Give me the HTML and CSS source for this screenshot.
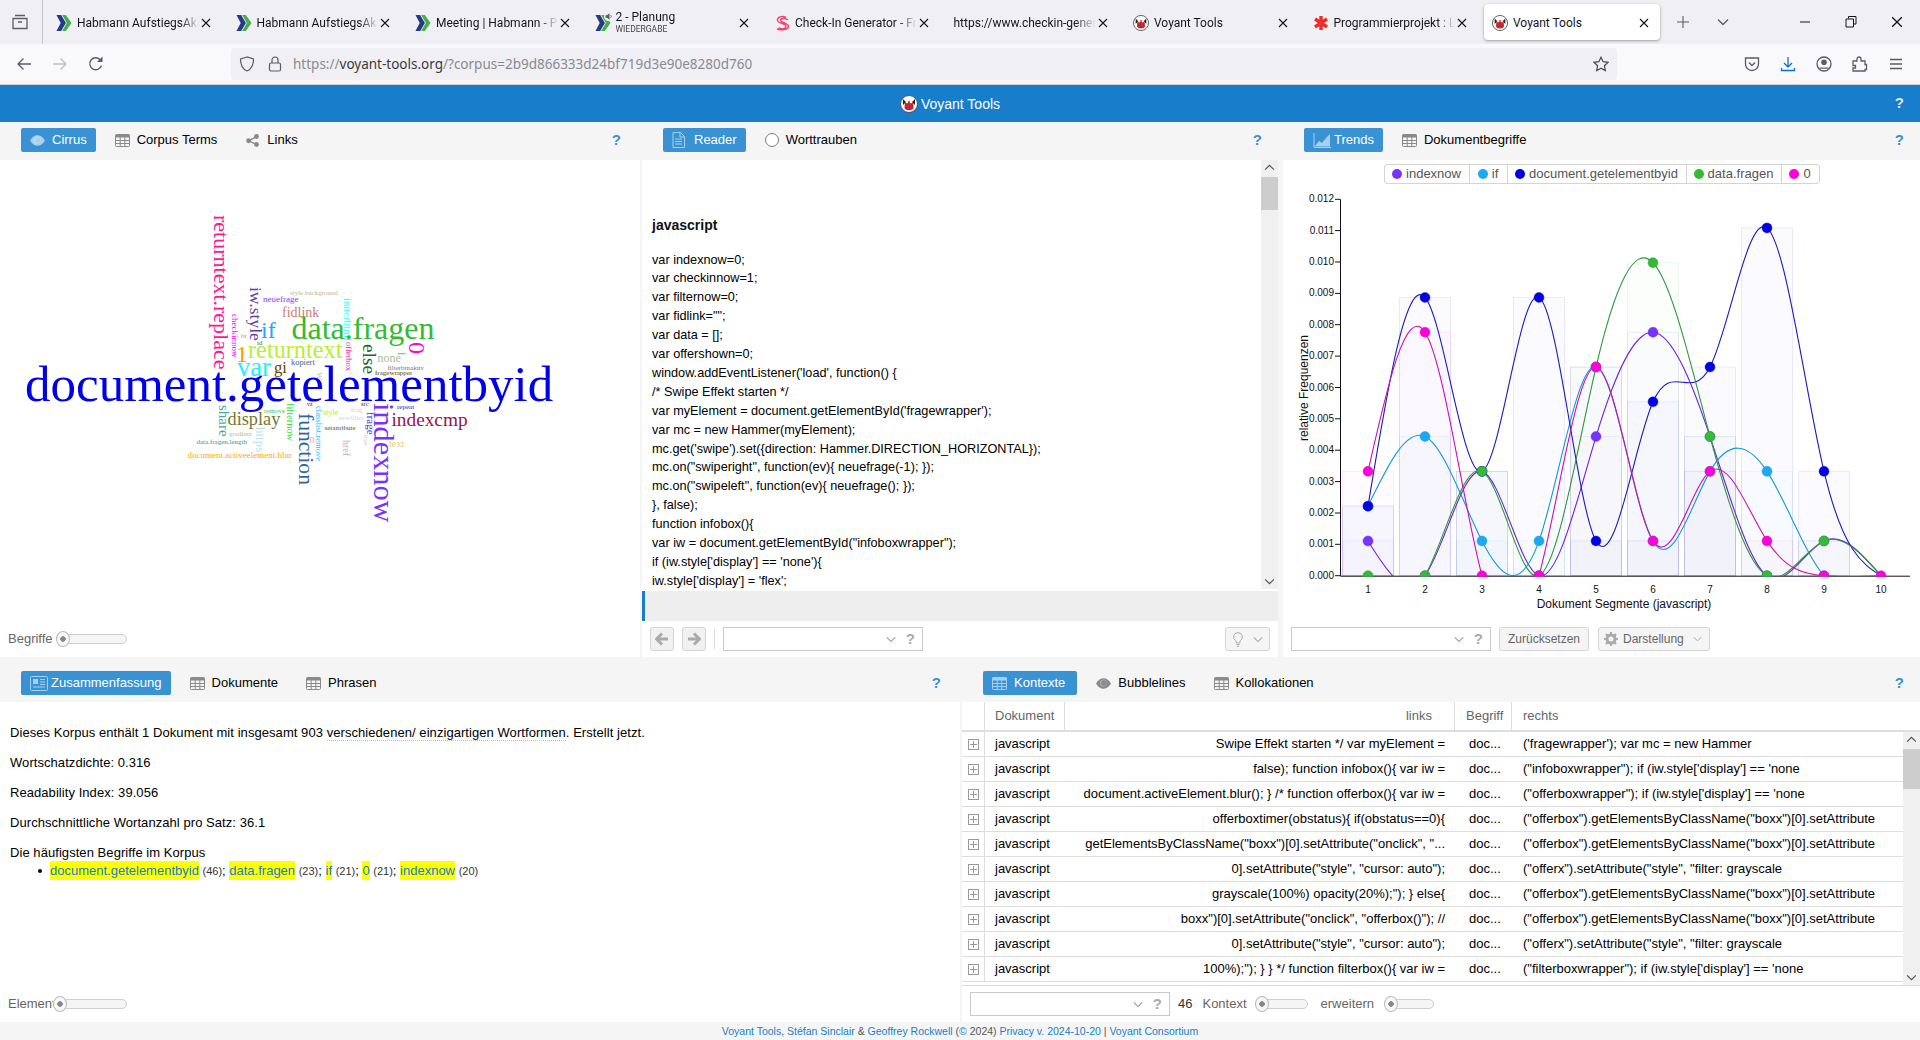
FILE: index.html
```html
<!DOCTYPE html>
<html lang="de">
<head>
<meta charset="utf-8">
<title>Voyant Tools</title>
<link rel="stylesheet" href="styles.css">
</head>
<body>
<svg class="defs" width="0" height="0" aria-hidden="true">
  <symbol id="i-grid" viewBox="0 0 15 13"><rect x=".5" y=".5" width="14" height="12" rx="1" fill="none" stroke="currentColor"/><rect x=".5" y=".5" width="14" height="3" fill="currentColor"/><path d="M5.2 3v10M9.8 3v10M0 6.5h15M0 9.5h15" stroke="currentColor" fill="none"/></symbol>
  <symbol id="i-eye" viewBox="0 0 16 12"><path d="M0 6C2.5 2 5 .5 8 .5S13.500 2 16 6c-2.500 4-5 5.500-8 5.500S2.500 10 0 6z" fill="currentColor"/><circle cx="8" cy="5.500" r="3.800" fill="#fff" opacity=".35"/><circle cx="8.500" cy="5.500" r="3" fill="currentColor"/></symbol>
  <symbol id="i-share" viewBox="0 0 14 14"><circle cx="11.300" cy="2.700" r="2.600" fill="currentColor"/><circle cx="2.800" cy="7.300" r="2.600" fill="currentColor"/><circle cx="11.300" cy="11.300" r="2.600" fill="currentColor"/><path d="M11 3 3 7.300l8 4" stroke="currentColor" stroke-width="1.500" fill="none"/></symbol>
  <symbol id="i-doc" viewBox="0 0 13 16"><path d="M1 .5h7.500L12.500 4.500V15.500H1z" fill="none" stroke="currentColor"/><path d="M3 7h7M3 9.500h7M3 12h7M8 1v4h4" stroke="currentColor" fill="none"/></symbol>
  <symbol id="i-trend" viewBox="0 0 18 15"><path d="M1 0v14.500h17" stroke="currentColor" fill="none"/><path d="M2 13 6 8l3 2 4-5 4-4v12.500H2z" fill="currentColor"/></symbol>
  <symbol id="i-news" viewBox="0 0 18 15"><rect x=".5" y=".5" width="17" height="14" rx="1" fill="none" stroke="currentColor"/><rect x="3" y="3" width="5" height="5" fill="currentColor"/><path d="M10 3.500h5M10 6h5M10 8.500h5M3 11h12" stroke="currentColor" fill="none"/></symbol>
  <symbol id="i-voyant" viewBox="0 0 18 18"><circle cx="9" cy="9" r="8.500" fill="#fff" stroke="#555"/><path d="M3 4l3 3-3 3zM15 4l-3 3 3 3z" fill="#222"/><path d="M5 7c2-1.500 6-1.500 8 0l.5 6c-1 3-8 3-9 0z" fill="#c4252e"/><circle cx="7" cy="7" r="1.300" fill="#fff"/><circle cx="11" cy="7" r="1.300" fill="#fff"/></symbol>
  <symbol id="i-chev" viewBox="0 0 12 8"><path d="M1 1.500l5 5 5-5" fill="none" stroke="currentColor" stroke-width="1.300"/></symbol>
  <symbol id="i-habmann" viewBox="0 0 16 17"><path d="M0 0h5l5 8.500L5 17H0l4.500-8.500z" fill="#263a86"/><path d="M6 0h4l6 8.500L10 17H6l5-8.500z" fill="#45b04a"/></symbol>
  <symbol id="i-x" viewBox="0 0 10 10"><path d="M1 1l8 8M9 1 1 9" stroke="currentColor" stroke-width="1.100" fill="none"/></symbol>
</svg>

<header class="tabbar">
  <div class="side-btn"><svg class="ico16" viewBox="0 0 16 16"><path d="M3 1.500h10M1 4.500h14v10H1z M6 8h4" fill="none" stroke="#5b5b66" stroke-width="1.300"/></svg></div>
  <div class="tab"><svg class="favicon"><use href="#i-habmann"/></svg><span class="tab-label">Habmann AufstiegsAkademie</span><svg class="tab-x"><use href="#i-x"/></svg></div>
  <div class="tab"><svg class="favicon"><use href="#i-habmann"/></svg><span class="tab-label">Habmann AufstiegsAkademie</span><svg class="tab-x"><use href="#i-x"/></svg></div>
  <div class="tab"><svg class="favicon"><use href="#i-habmann"/></svg><span class="tab-label">Meeting | Habmann - Projekt</span><svg class="tab-x"><use href="#i-x"/></svg></div>
  <div class="tab"><span class="fav-wrap"><svg class="favicon"><use href="#i-habmann"/></svg><svg class="speaker" viewBox="0 0 9 9"><circle cx="4.500" cy="4.500" r="4.500" fill="#f0f0f4"/><path d="M1.500 3.200h1.500L5.500 1.200v6.600L3 5.800H1.500z" fill="#5b5b66"/><path d="M6.500 3a2 2 0 0 1 0 3" fill="none" stroke="#5b5b66" stroke-width=".7"/></svg></span><span class="tab-label tab-two">2 - Planung<small>WIEDERGABE</small></span><svg class="tab-x"><use href="#i-x"/></svg></div>
  <div class="tab"><svg class="favicon" viewBox="0 0 16 16"><path d="M12 2.500C8 .5 3 2 3.500 5.500S12 8 12 11s-4 3.500-7.500 2M14 5C11 2.500 6.500 3.500 6.500 5.500S14 8 14.500 11 10 16 3 14" fill="none" stroke="#f2416b" stroke-width="1.400"/></svg><span class="tab-label">Check-In Generator - Free</span><svg class="tab-x"><use href="#i-x"/></svg></div>
  <div class="tab"><span class="tab-label">https://www.checkin-generator.de</span><svg class="tab-x"><use href="#i-x"/></svg></div>
  <div class="tab"><svg class="favicon"><use href="#i-voyant"/></svg><span class="tab-label">Voyant Tools</span><svg class="tab-x"><use href="#i-x"/></svg></div>
  <div class="tab"><svg class="favicon" viewBox="0 0 16 16"><path d="M8 1v14M2 4l12 8M14 4 2 12" stroke="#ef2b2d" stroke-width="3.400"/></svg><span class="tab-label">Programmierprojekt : Lernen</span><svg class="tab-x"><use href="#i-x"/></svg></div>
  <div class="tab tab-active"><svg class="favicon"><use href="#i-voyant"/></svg><span class="tab-label">Voyant Tools</span><svg class="tab-x"><use href="#i-x"/></svg></div>
  <div class="strip-btn"><svg class="ico12" viewBox="0 0 12 12"><path d="M6 0v12M0 6h12" stroke="#5b5b66" stroke-width="1.100"/></svg></div>
  <div class="strip-btn"><svg class="ico12 chev-tab"><use href="#i-chev"/></svg></div>
  <div class="win-controls">
    <div class="win-btn"><svg class="ico12" viewBox="0 0 12 12"><path d="M1 6h10" stroke="#15141a"/></svg></div>
    <div class="win-btn"><svg class="ico12" viewBox="0 0 12 12"><path d="M3.500 2.500V.5h7.500v7.500h-2.500M1 3h7.500v8H1z" fill="none" stroke="#15141a"/></svg></div>
    <div class="win-btn"><svg class="ico12"><use href="#i-x"/></svg></div>
  </div>
</header>

<nav class="navbar">
  <div class="nav-btn"><svg class="ico16" viewBox="0 0 16 16"><path d="M15 8H2M7.500 2.500 2 8l5.500 5.500" fill="none" stroke="#5b5b66" stroke-width="1.300"/></svg></div>
  <div class="nav-btn"><svg class="ico16" viewBox="0 0 16 16"><path d="M1 8h13M8.500 2.500 14 8l-5.500 5.500" fill="none" stroke="#bfbfc4" stroke-width="1.300"/></svg></div>
  <div class="nav-btn"><svg class="ico16" viewBox="0 0 16 16"><path d="M13.500 9.500A6 6 0 1 1 12 3.500" fill="none" stroke="#5b5b66" stroke-width="1.300"/><path d="M14.500.5v5.500H9z" fill="#5b5b66"/></svg></div>
  <div class="urlbar">
    <svg class="ico16" viewBox="0 0 16 16"><path d="M8 1 1.500 3c0 6 1.500 10 6.500 12 5-2 6.500-6 6.500-12z" fill="none" stroke="#5b5b66" stroke-width="1.200"/></svg>
    <svg class="ico16" viewBox="0 0 16 16"><rect x="2.500" y="7" width="11" height="8" rx="1.500" fill="none" stroke="#5b5b66" stroke-width="1.200"/><path d="M5 7V4a3 3 0 0 1 6 0v3" fill="none" stroke="#5b5b66" stroke-width="1.200"/></svg>
    <span class="url-text">https://<b>voyant-tools.org</b>/?corpus=2b9d866333d24bf719d3e90e8280d760</span>
    <svg class="ico16 url-star" viewBox="0 0 16 16"><path d="M8 1.200l2.100 4.500 4.900.6-3.600 3.400.9 4.900L8 12.200l-4.300 2.400.9-4.900L1 6.300l4.900-.6z" fill="none" stroke="#4a4a52" stroke-width="1.200"/></svg>
  </div>
  <div class="nav-right">
    <div class="nav-btn"><svg class="ico16" viewBox="0 0 16 16"><path d="M1.500 2h13v6a6.500 6.500 0 0 1-13 0z" fill="none" stroke="#5b5b66" stroke-width="1.300"/><path d="M5 6.500l3 3 3-3" fill="none" stroke="#5b5b66" stroke-width="1.300"/></svg></div>
    <div class="nav-btn"><svg class="ico16" viewBox="0 0 16 16"><path d="M8 1v9.500M4 7l4 4 4-4M1.500 12v2.500h13V12" fill="none" stroke="#0b6ee0" stroke-width="1.300"/></svg></div>
    <div class="nav-btn"><svg class="ico16" viewBox="0 0 16 16"><circle cx="8" cy="8" r="7" fill="none" stroke="#5b5b66" stroke-width="1.300"/><circle cx="8" cy="6.200" r="2.800" fill="#5b5b66"/><path d="M3.500 11.500h9v1.200H3.500z" fill="#5b5b66"/></svg></div>
    <div class="nav-btn"><svg class="ico16" viewBox="0 0 16 16"><path d="M1 5h4V3a2 2 0 0 1 4 0v2h4v3.500h1.500v5H13v1.500H1v-3h2.500V9.500H1z" fill="none" stroke="#5b5b66" stroke-width="1.300"/></svg></div>
    <div class="nav-btn"><svg class="ico16" viewBox="0 0 16 16"><path d="M2 3.500h12M2 8h12M2 12.500h12" stroke="#5b5b66" stroke-width="1.300"/></svg></div>
  </div>
</nav>

<div class="app-title">
  <svg class="title-logo"><use href="#i-voyant"/></svg><span>Voyant Tools</span><span class="help help-white">?</span>
</div>

<main class="workspace">
  <div class="row row-top">
    <section class="panel panel-cirrus">
      <div class="toolbar">
        <span class="tb-btn tb-on"><svg class="tb-ico"><use href="#i-eye"/></svg>Cirrus</span>
        <span class="tb-btn"><svg class="tb-ico"><use href="#i-grid"/></svg>Corpus Terms</span>
        <span class="tb-btn"><svg class="tb-ico"><use href="#i-share"/></svg>Links</span>
        <span class="help help-far">?</span>
      </div>
      <div class="panel-body">
        <svg class="cloud" viewBox="0 160 640 461" preserveAspectRatio="xMinYMin">
          <g class="cloud-words">
            <text x="25" y="401" font-size="51" fill="#0000ee">document.getelementbyid</text>
            <text transform="translate(213.500 215) rotate(90)" font-size="22" fill="#ff1493">returntext.replace</text>
            <text transform="translate(250 287) rotate(90)" font-size="17.500" fill="#6a3d9a">iw.style</text>
            <text x="263" y="302" font-size="9" fill="#7a44ff">neuefrage</text>
            <text x="290" y="295" font-size="7" fill="#c8b090">style.background</text>
            <text transform="translate(344 298) rotate(90)" font-size="11" fill="#33ffff">innerhtml</text>
            <text x="282" y="317" font-size="14" fill="#c88070">fidlink</text>
            <text transform="translate(232 314) rotate(90)" font-size="9" fill="#ff00ff">checkinnow</text>
            <text x="261" y="338" font-size="24" fill="#1ba8ff">if</text>
            <text x="291.500" y="339" font-size="32" fill="#33bb33">data.fragen</text>
            <text transform="translate(409 342) rotate(90)" font-size="24" fill="#ff00dd">0</text>
            <text x="241" y="338" font-size="7" fill="#c89070">br</text>
            <text x="257" y="345" font-size="7" fill="#556b2f">id</text>
            <text x="236" y="362" font-size="24" fill="#ff9900">1</text>
            <text x="248" y="358" font-size="24.300" fill="#b8ee33">returntext</text>
            <text transform="translate(346 342) rotate(90)" font-size="8.500" fill="#ff1493">offerbox</text>
            <text transform="translate(362.500 344) rotate(90)" font-size="19.300" fill="#226633">else</text>
            <text transform="translate(398 352) rotate(90)" font-size="12" fill="#9999aa">i</text>
            <text x="377.500" y="362" font-size="12" fill="#aabb99">none</text>
            <text x="387.500" y="370" font-size="7" fill="#667788">filterbtnaktiv</text>
            <text x="375" y="375" font-size="7" fill="#554400">fragewrapper</text>
            <text x="237" y="376" font-size="26.600" fill="#22eeff">var</text>
            <text x="274" y="372.500" font-size="16.700" fill="#664400">gi</text>
            <text x="291" y="365" font-size="8.400" fill="#336688">kopiert</text>
            <text transform="translate(317 372) rotate(90)" font-size="11" fill="#ccbbdd">w</text>
            <text transform="translate(350 372) rotate(90)" font-size="6" fill="#eecc88">2</text>
            <text transform="translate(219 405) rotate(90)" font-size="15" fill="#44aa99">share</text>
            <text x="227.500" y="425" font-size="18.300" fill="#777733">display</text>
            <text x="264" y="413" font-size="7" fill="#33cc55">remove</text>
            <text transform="translate(287 403) rotate(90)" font-size="10.400" fill="#33dd33">filternow</text>
            <text transform="translate(299 413) rotate(90)" font-size="21.600" fill="#336699">function</text>
            <text x="307" y="406" font-size="6" fill="#880000">vz</text>
            <text transform="translate(316 406) rotate(90)" font-size="8.600" fill="#33bbff">classlist.remove</text>
            <text x="323" y="415" font-size="8" fill="#aaee33">style</text>
            <text x="324.500" y="430" font-size="7" fill="#555522">setattribute</text>
            <text x="351" y="412" font-size="7" fill="#ffbbbb">frag</text>
            <text x="338.500" y="420" font-size="7" fill="#bbddee">newfilter</text>
            <text x="361" y="406" font-size="6.500" fill="#442266">src</text>
            <text x="397" y="409" font-size="7" fill="#2222cc">repeat</text>
            <text transform="translate(367 412) rotate(90)" font-size="11" fill="#3333dd">frage</text>
            <text transform="translate(364 435) rotate(90)" font-size="7" fill="#ccbbdd">true</text>
            <text transform="translate(373.500 403) rotate(90)" font-size="30.300" fill="#7733ff">indexnow</text>
            <text x="391.500" y="425.500" font-size="19.300" fill="#991155">indexcmp</text>
            <text x="389" y="447" font-size="10.300" fill="#e8cc77">text</text>
            <text transform="translate(343 440) rotate(90)" font-size="10" fill="#ccaaaa">href</text>
            <text x="309" y="443" font-size="12" fill="#ffbbaa">n</text>
            <text transform="translate(256 427) rotate(90)" font-size="13" fill="#bbddee">https</text>
            <text x="229" y="436" font-size="7" fill="#aabb99">gradient</text>
            <text x="196.500" y="444" font-size="7" fill="#339999">data.fragen.length</text>
            <text x="187.500" y="458" font-size="9" fill="#ffaa00">document.activeelement.blur</text>
          </g>
        </svg>
        <div class="slider-bar">
          <span class="slider-label slider-label-clip">Begriffe</span><span class="slider slider-terms"><i></i></span>
        </div>
      </div>
    </section>

    <section class="panel panel-reader">
      <div class="toolbar">
        <span class="tb-btn tb-on"><svg class="tb-ico tb-ico-doc"><use href="#i-doc"/></svg>Reader</span>
        <span class="tb-btn"><span class="radio"></span>Worttrauben</span>
        <span class="help">?</span>
      </div>
      <div class="panel-body">
        <div class="reader-main">
          <div class="reader-text">
            <h3>javascript</h3>
            <p>var indexnow=0;</p>
            <p>var checkinnow=1;</p>
            <p>var filternow=0;</p>
            <p>var fidlink="";</p>
            <p>var data = [];</p>
            <p>var offershown=0;</p>
            <p>window.addEventListener('load', function() {</p>
            <p>/* Swipe Effekt starten */</p>
            <p>var myElement = document.getElementById('fragewrapper');</p>
            <p>var mc = new Hammer(myElement);</p>
            <p>mc.get('swipe').set({direction: Hammer.DIRECTION_HORIZONTAL});</p>
            <p>mc.on("swiperight", function(ev){ neuefrage(-1); });</p>
            <p>mc.on("swipeleft", function(ev){ neuefrage(); });</p>
            <p>}, false);</p>
            <p>function infobox(){</p>
            <p>var iw = document.getElementById("infoboxwrapper");</p>
            <p>if (iw.style['display'] == 'none'){</p>
            <p>iw.style['display'] = 'flex';</p>
          </div>
          <div class="scrollbar scrollbar-reader"><svg class="sb-arrow"><use href="#i-chev"/></svg><i></i><svg class="sb-arrow sb-down"><use href="#i-chev"/></svg></div>
        </div>
        <div class="reader-band"></div>
        <div class="foot-bar">
          <span class="nav-arrow"><svg viewBox="0 0 14 14"><path d="M7 1.500 1.500 7 7 12.500M2 7h11" fill="none" stroke="#aaa" stroke-width="3"/></svg></span>
          <span class="nav-arrow"><svg viewBox="0 0 14 14"><path d="M7 1.500 12.500 7 7 12.500M12 7H1" fill="none" stroke="#aaa" stroke-width="3"/></svg></span>
          <span class="vsep"></span>
          <span class="combo"><svg class="combo-chev"><use href="#i-chev"/></svg><b class="combo-q">?</b></span>
          <span class="bulb"><svg class="bulb-ico" viewBox="0 0 10 15"><path d="M5 .7a4.300 4.300 0 0 0-2.300 8c.5.5.5 1.500.5 2.300h3.600c0-.8 0-1.800.5-2.300A4.300 4.300 0 0 0 5 .7zM3.500 12.500h3M4 14.300h2" fill="none" stroke="#aaa"/></svg><svg class="bulb-chev"><use href="#i-chev"/></svg></span>
        </div>
      </div>
    </section>

    <section class="panel panel-trends">
      <div class="toolbar">
        <span class="tb-btn tb-on"><svg class="tb-ico tb-ico-wide"><use href="#i-trend"/></svg>Trends</span>
        <span class="tb-btn"><svg class="tb-ico"><use href="#i-grid"/></svg>Dokumentbegriffe</span>
        <span class="help">?</span>
      </div>
      <div class="panel-body">
        <div class="legend-wrap">
          <div class="legend">
            <span class="lg-item lg-a"><i class="dot-indexnow"></i>indexnow</span>
            <span class="lg-item lg-b"><i class="dot-if"></i>if</span>
            <span class="lg-item lg-c"><i class="dot-doc"></i>document.getelementbyid</span>
            <span class="lg-item lg-d"><i class="dot-data"></i>data.fragen</span>
            <span class="lg-item lg-e"><i class="dot-zero"></i>0</span>
          </div>
        </div>
        <svg id="trend-chart" class="chart" width="637" height="434" viewBox="0 0 637 434"></svg>
        <div class="foot-bar foot-trends">
          <span class="combo combo-trends"><svg class="combo-chev"><use href="#i-chev"/></svg><b class="combo-q">?</b></span>
          <span class="plain-btn">Zurücksetzen</span>
          <span class="plain-btn plain-gear"><svg class="gear" viewBox="0 0 14 14"><circle cx="7" cy="7" r="4" fill="none" stroke="#aaa" stroke-width="3"/><path d="M7 0v3M7 11v3M0 7h3M11 7h3M2 2l2 2M10 10l2 2M12 2l-2 2M4 10l-2 2" stroke="#aaa" stroke-width="2"/></svg>Darstellung<svg class="plain-chev"><use href="#i-chev"/></svg></span>
        </div>
      </div>
    </section>
  </div>

  <div class="row row-bottom">
    <section class="panel panel-summary">
      <div class="toolbar toolbar-low">
        <span class="tb-btn tb-on"><svg class="tb-ico tb-ico-wide"><use href="#i-news"/></svg>Zusammenfassung</span>
        <span class="tb-btn"><svg class="tb-ico"><use href="#i-grid"/></svg>Dokumente</span>
        <span class="tb-btn"><svg class="tb-ico"><use href="#i-grid"/></svg>Phrasen</span>
        <span class="help help-far">?</span>
      </div>
      <div class="panel-body">
        <div class="summary">
          <p>Dieses Korpus enthält 1 Dokument mit insgesamt 903 <span class="dotted">verschiedenen/ einzigartigen Wortformen</span>. Erstellt jetzt.</p>
          <p>Wortschatzdichte: 0.316</p>
          <p>Readability Index: 39.056</p>
          <p>Durchschnittliche Wortanzahl pro Satz: 36.1</p>
          <p class="p-tight">Die häufigsten Begriffe im Korpus</p>
          <ul>
            <li><a>document.getelementbyid</a> <small>(46)</small>; <a>data.fragen</a> <small>(23)</small>; <a>if</a> <small>(21)</small>; <a>0</a> <small>(21)</small>; <a>indexnow</a> <small>(20)</small></li>
          </ul>
        </div>
        <div class="slider-bar slider-bar-low">
          <span class="slider-label slider-label-short">Elemente</span><span class="slider slider-items"><i></i></span>
        </div>
      </div>
    </section>

    <section class="panel panel-context">
      <div class="toolbar toolbar-low">
        <span class="tb-btn tb-on tb-kontexte"><svg class="tb-ico"><use href="#i-grid"/></svg>Kontexte</span>
        <span class="tb-btn"><svg class="tb-ico"><use href="#i-eye"/></svg>Bubblelines</span>
        <span class="tb-btn"><svg class="tb-ico"><use href="#i-grid"/></svg>Kollokationen</span>
        <span class="help">?</span>
      </div>
      <div class="panel-body">
        <div class="ctx-row ctx-head">
          <span class="c0"></span><span class="c1">Dokument</span><span class="c2 c2-head">links</span><span class="c3 c3-head">Begriff</span><span class="c4">rechts</span>
        </div>
        <div class="ctx-main">
          <div class="ctx-rows">
            <div class="ctx-row"><span class="c0"><i class="plus"></i></span><span class="c1">javascript</span><span class="c2">Swipe Effekt starten */ var myElement =</span><span class="c3">doc...</span><span class="c4">('fragewrapper'); var mc = new Hammer</span></div>
            <div class="ctx-row"><span class="c0"><i class="plus"></i></span><span class="c1">javascript</span><span class="c2">false); function infobox(){ var iw =</span><span class="c3">doc...</span><span class="c4">("infoboxwrapper"); if (iw.style['display'] == 'none</span></div>
            <div class="ctx-row"><span class="c0"><i class="plus"></i></span><span class="c1">javascript</span><span class="c2">document.activeElement.blur(); } /* function offerbox(){ var iw =</span><span class="c3">doc...</span><span class="c4">("offerboxwrapper"); if (iw.style['display'] == 'none</span></div>
            <div class="ctx-row"><span class="c0"><i class="plus"></i></span><span class="c1">javascript</span><span class="c2">offerboxtimer(obstatus){ if(obstatus==0){</span><span class="c3">doc...</span><span class="c4">("offerbox").getElementsByClassName("boxx")[0].setAttribute</span></div>
            <div class="ctx-row"><span class="c0"><i class="plus"></i></span><span class="c1">javascript</span><span class="c2">getElementsByClassName("boxx")[0].setAttribute("onclick", "...</span><span class="c3">doc...</span><span class="c4">("offerbox").getElementsByClassName("boxx")[0].setAttribute</span></div>
            <div class="ctx-row"><span class="c0"><i class="plus"></i></span><span class="c1">javascript</span><span class="c2">0].setAttribute("style", "cursor: auto");</span><span class="c3">doc...</span><span class="c4">("offerx").setAttribute("style", "filter: grayscale</span></div>
            <div class="ctx-row"><span class="c0"><i class="plus"></i></span><span class="c1">javascript</span><span class="c2">grayscale(100%) opacity(20%);"); } else{</span><span class="c3">doc...</span><span class="c4">("offerbox").getElementsByClassName("boxx")[0].setAttribute</span></div>
            <div class="ctx-row"><span class="c0"><i class="plus"></i></span><span class="c1">javascript</span><span class="c2">boxx")[0].setAttribute("onclick", "offerbox()"); //</span><span class="c3">doc...</span><span class="c4">("offerbox").getElementsByClassName("boxx")[0].setAttribute</span></div>
            <div class="ctx-row"><span class="c0"><i class="plus"></i></span><span class="c1">javascript</span><span class="c2">0].setAttribute("style", "cursor: auto");</span><span class="c3">doc...</span><span class="c4">("offerx").setAttribute("style", "filter: grayscale</span></div>
            <div class="ctx-row"><span class="c0"><i class="plus"></i></span><span class="c1">javascript</span><span class="c2">100%);"); } } */ function filterbox(){ var iw =</span><span class="c3">doc...</span><span class="c4">("filterboxwrapper"); if (iw.style['display'] == 'none</span></div>
          </div>
          <div class="scrollbar scrollbar-ctx"><svg class="sb-arrow"><use href="#i-chev"/></svg><i></i><svg class="sb-arrow sb-down"><use href="#i-chev"/></svg></div>
        </div>
        <div class="foot-bar foot-context">
          <span class="combo combo-ctx"><svg class="combo-chev"><use href="#i-chev"/></svg><b class="combo-q">?</b></span>
          <span class="ctx-count">46</span>
          <span class="slider-label">Kontext</span><span class="slider slider-a"><i></i></span>
          <span class="slider-label slider-label-b">erweitern</span><span class="slider slider-b"><i></i></span>
        </div>
      </div>
    </section>
  </div>
</main>

<footer class="page-foot"><a>Voyant Tools</a>, <a>Stéfan Sinclair</a> &amp; <a>Geoffrey Rockwell</a> (<a>©</a> 2024) <a>Privacy</a> <a>v. 2024-10-20</a> | <a>Voyant Consortium</a></footer>
<script src="chart.js"></script>
</body>
</html>
```
FILE: styles.css
```css
* { box-sizing: border-box; }
html, body { margin: 0; height: 100%; }
body {
  width: 1920px; height: 1040px; overflow: hidden;
  display: flex; flex-direction: column;
  background: #f5f5f5; color: #000;
  font: 13px/16px "Liberation Sans", Arial, sans-serif;
}
.defs { position: absolute; }
svg { display: block; flex: none; }
.ico16 { width: 16px; height: 16px; }
.ico12 { width: 12px; height: 12px; color: #15141a; }

/* browser chrome */
.tabbar {
  height: 44px; flex: none; display: flex; align-items: stretch;
  background: #f0f0f4; color: #15141a;
  font: 12px/16px Roboto, sans-serif;
}
.side-btn {
  width: 43px; margin-right: 1px; flex: none; display: flex; align-items: center; padding-left: 12px;
  border-right: 1px solid #c4c4c8;
}
.tab {
  width: 179.500px; flex: none; display: flex; align-items: center;
  padding: 1px 13px 0 12px;
}
.favicon { width: 16px; height: 16px; margin-right: 5px; }
.fav-wrap { position: relative; flex: none; }
.speaker { position: absolute; left: 9px; top: -3px; width: 9px; height: 9px; }
.tab-label {
  flex: 1; min-width: 0; white-space: nowrap; overflow: hidden;
  -webkit-mask-image: linear-gradient(to right, #000 85%, transparent);
  mask-image: linear-gradient(to right, #000 85%, transparent);
}
.tab-two { line-height: 14px; }
.tab-two small { display: block; font-size: 8.500px; line-height: 11px; color: #444; }
.tab-x { width: 10px; height: 10px; margin-left: 2px; color: #15141a; }
.tab-active {
  width: 176px; margin: 4px 4px 4px 4px; padding: 1px 11px 0 8px;
  background: #fff; border-radius: 4px; box-shadow: 0 1px 3px rgba(0,0,0,.35);
}
.tab-active .tab-label { -webkit-mask-image: none; mask-image: none; }
.strip-btn { width: 38px; flex: none; display: flex; align-items: center; justify-content: center; margin-right: 2px; }
.chev-tab { color: #5b5b66; }
.win-controls { margin-left: auto; display: flex; }
.win-btn { width: 46px; display: flex; align-items: center; justify-content: center; }

.navbar {
  height: 41px; flex: none; display: flex; align-items: center;
  padding: 0 6px; background: #f9f9fb; border-bottom: 1px solid #cfcfd8;
}
.nav-btn { width: 36px; height: 32px; flex: none; display: flex; align-items: center; justify-content: center; }
.urlbar {
  width: 1386px; height: 32px; margin-left: 117px; flex: none; display: flex; align-items: center;
  padding: 0 8px; gap: 12px; background: #f0f0f4; border-radius: 4px;
}
.url-text { font: 13.500px/16px "Noto Sans", sans-serif; color: #8a8a90; margin-left: -2px; }
.url-text b { font-weight: 400; color: #3a3a40; }
.url-star { margin-left: auto; }
.nav-right { margin-left: auto; display: flex; }

.app-title {
  height: 37px; flex: none; display: flex; align-items: center; justify-content: center;
  padding-right: 20px;
  background: #187dcb; color: #fff; font-size: 14px; position: relative;
}
.title-logo { width: 18px; height: 18px; margin-right: 3px; }
.help-white { position: absolute; right: 16px; top: 9px; color: #d9ecfa; }

/* workspace */
.workspace { flex: 1; min-height: 0; display: flex; flex-direction: column; gap: 3px; }
.row { display: flex; }
.row-top { height: 535px; }
.row-bottom { height: 362px; }
.panel { display: flex; flex-direction: column; min-width: 0; }
.panel-cirrus { width: 640px; }
.panel-reader { width: 636px; margin-left: 2px; }
.panel-trends { width: 637px; margin-left: 5px; }
.panel-summary { width: 960px; }
.panel-context { width: 958px; margin-left: 2px; }
.panel-body { flex: 1; min-height: 0; display: flex; flex-direction: column; background: #fff; }

.toolbar { height: 38px; flex: none; display: flex; align-items: flex-start; padding: 6px 16px 0 21px; gap: 10px; }
.panel-cirrus .toolbar { padding-right: 19px; }
.panel-summary .toolbar { padding-right: 19px; }
.toolbar-low { height: 42px; padding-top: 11px; }
.tb-btn { height: 24px; display: inline-flex; align-items: center; padding: 0 9px; gap: 7px; color: #000; border-radius: 2px; white-space: nowrap; }
.tb-on { background: #3892d4; color: #fff; }
.tb-kontexte { padding-right: 12px; }
.tb-ico { width: 15px; height: 13px; color: #8a8a8a; }
.tb-on .tb-ico { color: #a8d0ee; }
.tb-ico-doc { width: 13px; height: 16px; margin-right: 2px; }
.tb-ico-wide { width: 18px; height: 15px; margin-right: -4px; }
.radio { width: 14px; height: 14px; border: 1px solid #7d7d7d; border-radius: 50%; background: #fff; }
.help { margin-left: auto; font-weight: 700; font-size: 15px; line-height: 24px; color: #3892d4; }
.help-white { margin: 0; line-height: 18px; color: #d9ecfa; }

/* cirrus */
.cloud { flex: 1; min-height: 0; width: 640px; }
.cloud-words text { font-family: "Liberation Serif", "Times New Roman", serif; }
.slider-bar { height: 36px; flex: none; display: flex; align-items: center; padding-left: 8px; }
.slider-bar-low { height: 36px; margin-top: auto; }
.slider-label { color: #666; white-space: nowrap; }
.slider-label-clip { width: 48px; overflow: hidden; }
.slider-label-short { width: 45px; overflow: hidden; }
.slider { position: relative; width: 63px; height: 10px; border: 1px solid #cfcfcf; border-radius: 5px; background: #f5f5f5; }
.slider-terms { width: 71px; }
.slider-items { width: 74px; }
.slider i { position: absolute; left: -1px; top: -4px; width: 14px; height: 16px; border-radius: 50%; border: 1px solid #bbb; background: radial-gradient(circle, #888 0 2.500px, #f7f7f7 3px); }

/* reader */
.reader-main { height: 429px; flex: none; display: flex; }
.reader-text { flex: 1; min-width: 0; overflow: hidden; padding: 56px 10px 0; font-size: 12.700px; }
.reader-text h3 { margin: 0 0 16.500px; font-size: 14px; line-height: 18px; font-weight: 700; color: #111; }
.reader-text p { margin: 0; line-height: 18.900px; white-space: nowrap; }
.scrollbar { width: 17px; flex: none; background: #f0f0f0; position: relative; color: #505050; }
.scrollbar i { position: absolute; left: 0; right: 0; background: #cdcdcd; }
.scrollbar-reader i { top: 17px; height: 33px; }
.sb-arrow { position: absolute; left: 3px; top: 4px; width: 11px; height: 7px; transform: rotate(180deg); }
.sb-down { top: auto; bottom: 4px; transform: none; }
.reader-band { height: 30px; flex: none; margin-top: 2px; background: #eee; border-left: 3px solid #187dcb; }
.foot-bar { flex: 1; display: flex; align-items: flex-start; padding: 6px 8px 0; }
.nav-arrow { width: 24px; height: 24px; margin-right: 8px; border: 1px solid #d4d4d4; border-radius: 3px; background: #f1f1f1; display: flex; align-items: center; justify-content: center; }
.nav-arrow svg { width: 14px; height: 14px; }
.vsep { width: 1px; height: 20px; margin: 2px 8px 0 0; background: #ddd; }
.combo { position: relative; width: 200px; height: 24px; border: 1px solid #c9c9c9; background: #fff; flex: none; }
.combo-chev { position: absolute; right: 26px; top: 8px; width: 10px; height: 7px; color: #9a9a9a; }
.combo-q { position: absolute; right: 7px; top: 3px; font-size: 15px; color: #aaa; }
.bulb { width: 45px; height: 24px; margin-left: auto; margin-right: 0; border: 1px solid #d4d4d4; border-radius: 3px; background: #f5f5f5; display: flex; align-items: center; padding-left: 7px; gap: 10px; }
.bulb-ico { width: 10px; height: 15px; }
.bulb-chev { width: 10px; height: 7px; color: #aaa; }

/* trends */
.legend-wrap { height: 27px; flex: none; display: flex; justify-content: center; padding-top: 4px; }
.legend { display: flex; height: 20px; border: 1px solid #d4d4d4; border-radius: 3px; color: #555; font-size: 13px; }
.lg-item { display: flex; align-items: center; justify-content: center; gap: 4px; border-left: 1px solid #d4d4d4; }
.lg-item:first-child { border-left: 0; }
.lg-item i { width: 10px; height: 10px; border-radius: 50%; }
.lg-a { width: 84px; } .lg-b { width: 38px; } .lg-c { width: 179px; } .lg-d { width: 95px; } .lg-e { width: 38px; }
.dot-indexnow { background: #7733ff; }
.dot-if { background: #1ba8f5; }
.dot-doc { background: #0000e6; }
.dot-data { background: #33bb33; }
.dot-zero { background: #ff00dd; }
.chart text { font-family: "Liberation Sans", Arial, sans-serif; fill: #111; }
.foot-trends { padding-left: 8px; gap: 8px; }
.combo-trends { width: 200px; }
.plain-btn { height: 24px; display: inline-flex; align-items: center; padding: 0 8px; border: 1px solid #d4d4d4; border-radius: 3px; background: #f5f5f5; color: #666; font-size: 12px; white-space: nowrap; }
.plain-gear { gap: 5px; padding: 0 7px 0 5px; margin-left: 1px; }
.gear { width: 14px; height: 14px; }
.plain-chev { width: 9px; height: 6px; color: #aaa; margin-left: 4px; }

/* summary */
.summary { padding: 23px 10px 0; letter-spacing: .06px; }
.summary p { margin: 0 0 14px; line-height: 16px; }
.summary .p-tight { margin: 0; }
.dotted { border-bottom: 1px dotted #b9b9dd; }
.summary ul { margin: 0; padding: 0 0 0 30px; list-style: none; letter-spacing: 0; }
.summary li { line-height: 19px; position: relative; padding-left: 10px; }
.summary li::before { content: ""; position: absolute; left: -2px; top: 8px; width: 4px; height: 4px; border-radius: 50%; background: #000; }
.summary a { background: #ffff00; color: #157fcc; padding: 2px 0; }
.summary small { font-size: 11px; color: #333; }

/* contexts */
.ctx-row { display: grid; grid-template-columns: 23px 80px 390px 57px 391px; height: 25px; align-items: stretch; border-bottom: 1px solid #ddd; }
.ctx-row > span { display: flex; align-items: center; white-space: nowrap; overflow: hidden; }
.c0 { justify-content: center; border-right: 1px solid #ddd; }
.c1 { padding-left: 10px; }
.c2 { justify-content: flex-end; padding-right: 10px; }
.c3 { padding-left: 14px; }
.c4 { padding-left: 11px; }
.ctx-head { height: 30px; border-bottom: 2px solid #ddd; color: #666; }
.ctx-head .c1, .ctx-head .c2 { border-right: 1px solid #ddd; }
.ctx-head .c3 { border-right: 1px solid #ddd; padding-left: 11px; }
.c2-head { padding-right: 22px !important; }
.ctx-main { height: 254px; flex: none; display: flex; border-bottom: 1px solid #ddd; }
.ctx-rows { flex: 1; min-width: 0; }
.scrollbar-ctx i { top: 17px; height: 40px; }
.plus { width: 11px; height: 11px; display: block; border: 1px solid #999; background: linear-gradient(#999,#999) center/7px 1px no-repeat, linear-gradient(#999,#999) center/1px 7px no-repeat; }
.foot-context { padding: 6px 8px 0; align-items: flex-start; }
.foot-context .slider-label { line-height: 24px; margin-left: 10px; }
.combo-ctx { width: 200px; }
.ctx-count { margin-left: 8px; line-height: 24px; color: #333; }
.foot-context .slider { margin: 7px 0 0 8px; }
.foot-context .slider-a { width: 53px; }
.foot-context .slider-label-b { margin-left: 13px; }
.foot-context .slider-b { width: 50px; margin-left: 10px; }

.page-foot { height: 18px; flex: none; text-align: center; font-size: 10.500px; line-height: 18px; color: #555; }
.page-foot a { color: #157fcc; }
```
FILE: chart.js
```js
(function () {
  var NS = 'http://www.w3.org/2000/svg';
  var svg = document.getElementById('trend-chart');
  var X0 = 85, DX = 57, BASE = 388.7, PER = 34.78, TICK = 31.37;
  var series = [
    { c: '#7733ff', l: '#6a22e0', d: [1,0,3,0,4,7,4,0,1,0] },
    { c: '#1ba8f5', l: '#1598d8', d: [2,4,1,1,6,1,3,3,0,0] },
    { c: '#0000e6', l: '#1a1ac0', d: [2,8,3,8,1,5,6,10,3,0] },
    { c: '#33bb33', l: '#2a9a3a', d: [0,0,3,0,6,9,4,0,1,0] },
    { c: '#ff00dd', l: '#cc10b0', d: [3,7,0,0,6,1,3,1,0,0] }
  ];
  function el(n, a, t) {
    var e = document.createElementNS(NS, n);
    for (var k in a) e.setAttribute(k, a[k]);
    if (t !== undefined) e.textContent = t;
    svg.appendChild(e);
    return e;
  }
  function spline(v) {
    var n = v.length - 1, a = [], b = [], c = [], r = [], i;
    a[0] = 0; b[0] = 2; c[0] = 1; r[0] = v[0] + 2 * v[1];
    for (i = 1; i < n - 1; i++) { a[i] = 1; b[i] = 4; c[i] = 1; r[i] = 4 * v[i] + 2 * v[i + 1]; }
    a[n - 1] = 2; b[n - 1] = 7; c[n - 1] = 0; r[n - 1] = 8 * v[n - 1] + v[n];
    for (i = 1; i < n; i++) { var m = a[i] / b[i - 1]; b[i] -= m * c[i - 1]; r[i] -= m * r[i - 1]; }
    var p1 = []; p1[n - 1] = r[n - 1] / b[n - 1];
    for (i = n - 2; i >= 0; i--) p1[i] = (r[i] - c[i] * p1[i + 1]) / b[i];
    var p2 = [];
    for (i = 0; i < n - 1; i++) p2[i] = 2 * v[i + 1] - p1[i + 1];
    p2[n - 1] = (v[n] + p1[n - 1]) / 2;
    return { p1: p1, p2: p2 };
  }
  function clipRect(id, h) {
    var clip = document.createElementNS(NS, 'clipPath'); clip.setAttribute('id', id);
    var cr = document.createElementNS(NS, 'rect');
    cr.setAttribute('x', 57); cr.setAttribute('y', 0); cr.setAttribute('width', 575); cr.setAttribute('height', h);
    clip.appendChild(cr); defs.appendChild(clip);
  }
  var defs = el('defs', {});
  clipRect('plot', BASE);
  clipRect('dots', BASE + 1);

  series.forEach(function (s) {
    s.d.forEach(function (v, i) {
      if (!v) return;
      el('rect', { x: X0 + i * DX - 25.5, y: BASE - v * PER, width: 51, height: v * PER,
        fill: s.c, 'fill-opacity': .016, stroke: s.c, 'stroke-opacity': .08 });
    });
  });
  series.forEach(function (s) {
    var ys = s.d.map(function (v) { return BASE - v * PER; });
    var xs = s.d.map(function (v, i) { return X0 + i * DX; });
    var sx = spline(xs), sy = spline(ys);
    var d = 'M' + xs[0] + ' ' + ys[0];
    for (var i = 0; i < xs.length - 1; i++) {
      d += 'C' + sx.p1[i].toFixed(2) + ' ' + sy.p1[i].toFixed(2) + ' ' + sx.p2[i].toFixed(2) + ' ' + sy.p2[i].toFixed(2) + ' ' + xs[i + 1] + ' ' + ys[i + 1];
    }
    el('path', { d: d, fill: 'none', stroke: s.l, 'stroke-width': 1.1, 'clip-path': 'url(#plot)' });
  });
  el('path', { d: 'M57.5 ' + (BASE - 12 * TICK) + 'V' + (BASE + .5) + 'H627', fill: 'none', stroke: '#111' });
  series.forEach(function (s) {
    s.d.forEach(function (v, i) {
      if (i === 9 && s.c !== '#ff00dd') return;
      el('circle', { cx: X0 + i * DX, cy: BASE - v * PER, r: 5, fill: s.c, stroke: s.l, 'stroke-opacity': .4, 'clip-path': 'url(#dots)' });
    });
  });
  for (var t = 0; t <= 12; t++) {
    var y = BASE - t * TICK;
    el('path', { d: 'M52 ' + y.toFixed(1) + 'H57', stroke: '#111' });
    el('text', { x: 51, y: (y + 3).toFixed(1), 'text-anchor': 'end', 'font-size': 10 }, (t / 1000).toFixed(3));
  }
  for (var n = 1; n <= 10; n++) {
    el('text', { x: X0 + (n - 1) * DX, y: BASE + 17, 'text-anchor': 'middle', 'font-size': 10 }, n);
  }
  el('text', { x: 341, y: BASE + 32, 'text-anchor': 'middle', 'font-size': 12 }, 'Dokument Segmente (javascript)');
  el('text', { transform: 'translate(25 201) rotate(-90)', 'text-anchor': 'middle', 'font-size': 12 }, 'relative Frequenzen');
})();
```
